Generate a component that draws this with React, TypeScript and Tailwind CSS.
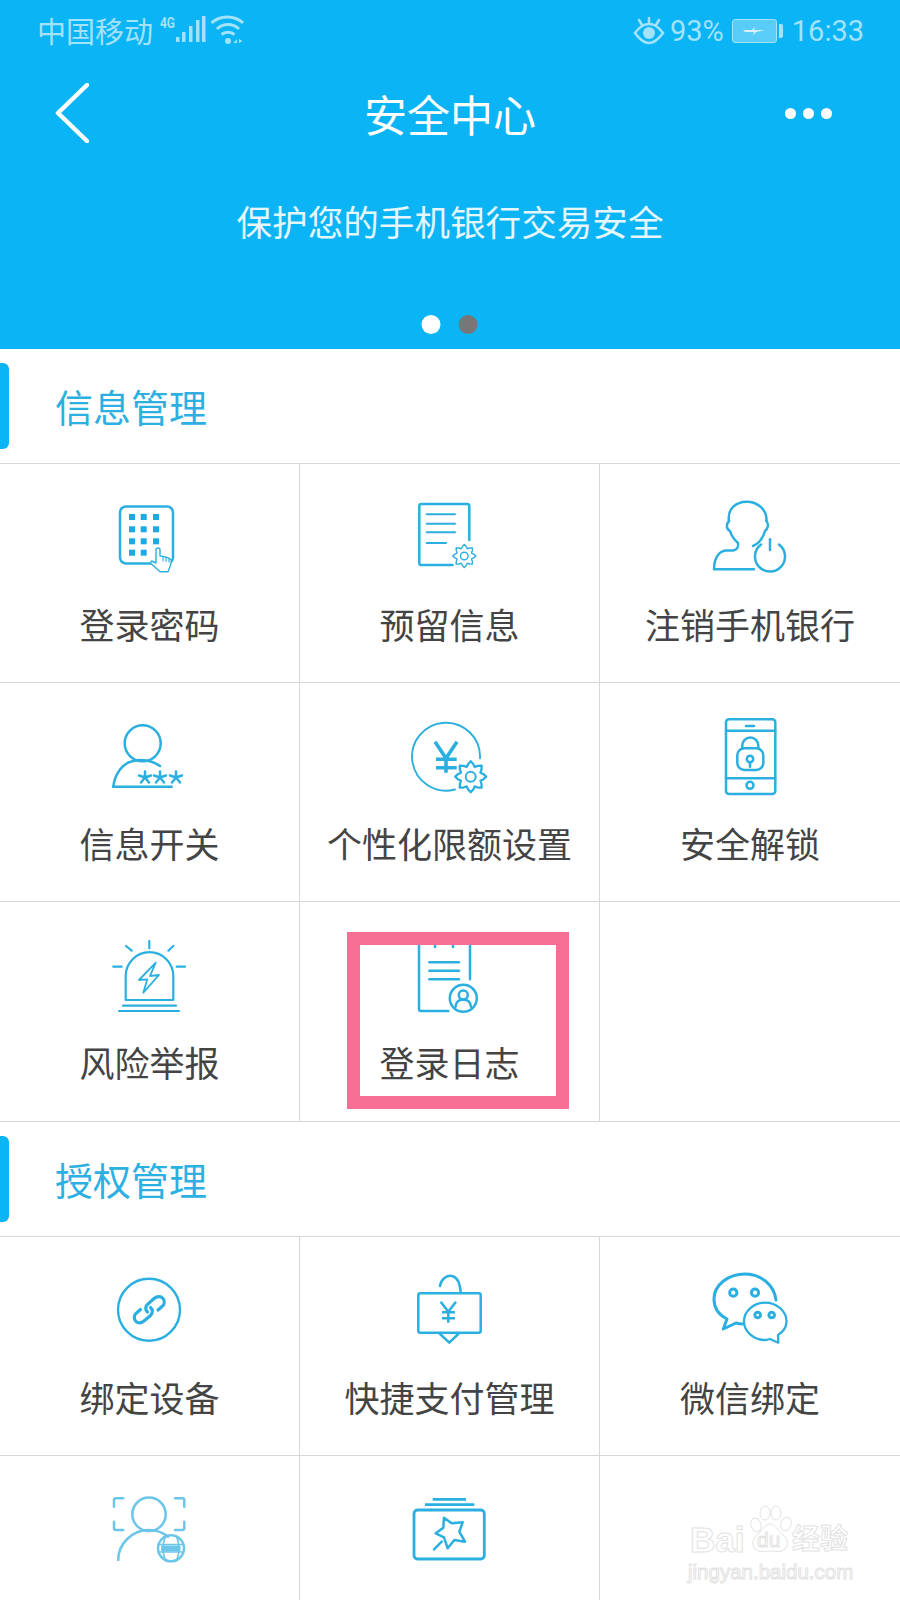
import React from 'react';

const BLUE = '#2bafe0';
const cjk = { fontFamily: '"Noto Sans CJK SC", sans-serif' };

// scalloped cog outline, used by a few of the menu icons
function gearPath(cx: number, cy: number, r: number) {
  const pts: string[] = [];
  for (let i = 0; i < 32; i++) {
    const a = (i / 32) * Math.PI * 2;
    const rr = r * (0.84 + 0.16 * Math.cos(a * 8));
    pts.push(`${(cx + rr * Math.cos(a)).toFixed(2)} ${(cy + rr * Math.sin(a)).toFixed(2)}`);
  }
  return `M${pts.join('L')}Z`;
}

function Icon({ children, color = BLUE, width = 2.5 }: { children: React.ReactNode; color?: string; width?: number }) {
  return (
    <svg
      width="100"
      height="100"
      viewBox="0 0 100 100"
      fill="none"
      stroke={color}
      strokeWidth={width}
      strokeLinecap="round"
      strokeLinejoin="round"
    >
      {children}
    </svg>
  );
}

function Asterisk({ x, y }: { x: number; y: number }) {
  return (
    <path d={`M${x} ${y - 6}V${y + 1}M${x - 6} ${y - 2}L${x} ${y}L${x + 6} ${y - 2}M${x - 4} ${y + 5}L${x} ${y}L${x + 4} ${y + 5}`} />
  );
}

const KeypadIcon = () => {
  const xs = [32, 43.7, 56];
  const ys = [31, 43.3, 55.3, 66.7];
  return (
    <Icon>
      <rect x="20" y="20.5" width="53" height="57" rx="6" strokeWidth="2.5" />
      {ys.map((y, r) =>
        xs.map((x, c) =>
          r === 3 && c === 2 ? null : <rect key={`${r}${c}`} x={x - 3} y={y - 3} width="6" height="6" fill="#1fa9e2" stroke="none" />,
        ),
      )}
      <path
        d="M56 73V64a2 2 0 0 1 4 0V70l3 .4 3 .8 3 1 2.5 2-1 5-2.5 6.5H60L50.5 77l1-2 4.5 2Z"
        fill="#fff"
        strokeWidth="1.4"
      />
      <path d="M63 70.5V75M66 71.2V75.5M69 72.2V76" strokeWidth="1.1" />
    </Icon>
  );
};

const DocGearIcon = () => (
  <Icon>
    <path d="M69.3 54V20a2 2 0 0 0-2-2H21.3a2 2 0 0 0-2 2V77a2 2 0 0 0 2 2H52.5" />
    <path d="M26.7 28.3H55M26.7 37.7H55M26.7 46.3H55M26.7 57H46" strokeWidth="2" />
    <path d={gearPath(64.3, 70, 11.5)} strokeWidth="1.4" />
    <circle cx="64.3" cy="70" r="3.8" strokeWidth="1.4" />
  </Icon>
);

const PersonPowerIcon = () => (
  <Icon>
    <path d="M29 35C27 23 36 15.7 46.7 15.7C57 15.7 67 23 66.5 35" />
    <path d="M29 35C26 38 26 43 30 45C32 52 36 55 38 57C39 62 36 64 33 64.5H26C19 65 14 72 14 83.3H54" />
    <path d="M66.5 35C69 38 68 43 65 45C63 52 60 57 53 60" />
    <path d="M61 58.5A15 15 0 1 0 79 58.5" />
    <path d="M70 53.3V64" />
  </Icon>
);

const PersonStarsIcon = () => (
  <Icon>
    <circle cx="42.7" cy="38.3" r="18" />
    <path d="M13.3 81.7C15 68 23 58 33 56C41 54 52 55 60 61" />
    <path d="M13.3 81.7H71.7" />
    <Asterisk x={45} y={72.5} />
    <Asterisk x={60} y={72.5} />
    <Asterisk x={76} y={72.5} />
  </Icon>
);

const YenGearIcon = () => (
  <Icon width={1.9}>
    <path d="M80 53.3A34 34 0 1 0 55 84.5" />
    <path d="M35 36.7L46 53.3L57 36.7M46 53.3V67.7M36 54.3H56.7M36 62.7H56.7" strokeWidth="3.6" strokeLinecap="butt" strokeLinejoin="miter" />
    <path d={gearPath(70.7, 71.7, 15.5)} strokeWidth="2.3" />
    <circle cx="70.7" cy="71.7" r="5" />
  </Icon>
);

const PhoneLockIcon = () => (
  <Icon>
    <rect x="26" y="14.3" width="49.3" height="74.7" rx="3" />
    <path d="M26 25.7H75.3M26 73.3H75.3M46 21H54" />
    <circle cx="50" cy="80.3" r="3.5" />
    <rect x="37.3" y="43.3" width="26" height="21.7" rx="7" />
    <path d="M42.3 43.3V40.5a8 8 0 0 1 16 0V43.3" />
    <circle cx="50" cy="54" r="3.2" />
    <path d="M50 57.2V61.7" />
  </Icon>
);

const AlarmIcon = () => (
  <Icon width={2.2}>
    <path d="M25.7 76V52a23.8 23.8 0 0 1 47.6 0V76Z" />
    <path d="M23 81.7H76M19 87H79" />
    <path d="M49.3 17V24.3M26 22L31.7 26.7M73.3 22L68.3 26.7M13.3 42.7H21.7M76.7 42.7H85" />
    <path d="M55.7 38.7L39 56L47.3 55.3L43.3 68.7L59 51L50 52Z" strokeWidth="1.8" />
  </Icon>
);

const LogIcon = () => (
  <Icon>
    <path d="M70 55.3V18M19 18V85a2 2 0 0 0 2 2H48.3" />
    <path d="M35 16V23M53 16V23" />
    <path d="M29.3 38.3H59M29.3 46.7H59M29.3 55.3H59" />
    <circle cx="63.3" cy="74.3" r="13.5" />
    <circle cx="63.3" cy="71" r="4.5" />
    <path d="M55.5 83C56 77 60 75.5 63.3 75.5C67 75.5 70.5 77 71 83" />
  </Icon>
);

const LinkIcon = () => (
  <Icon>
    <circle cx="49" cy="50.7" r="31" strokeWidth="2.4" />
    <g strokeWidth="3.2">
      <path d="M47.5 53C45 51 45 47 48 45L54 39.5C57 37 61 37 63 39.5C65 42 64.5 45.5 62 47.5L58 51" />
      <path d="M50.5 48.5C53 50.5 53 54 50.5 56.5L44 62C41 64.5 37.5 64.5 35.5 62C33.5 59.5 34 56 36.5 54L40.5 50.5" />
    </g>
  </Icon>
);

const WalletIcon = () => (
  <Icon>
    <rect x="18.3" y="34.3" width="62.4" height="39.4" rx="2" />
    <path d="M40 75L49.3 83.7L58.3 75" />
    <path d="M40 27C41 20 47 16 52 17C57 18 60 25 60.7 33" />
    <path d="M40.7 42.7L48.3 52.7L56 42.7M48.3 52.7V63.7M42 53.3H55M42 59.3H55" strokeLinecap="butt" />
  </Icon>
);

const WechatIcon = () => (
  <Icon width={3}>
    <path d="M76 41C74 25 60 15 45 15C28 15 14 26 14 40C14 49 19 56 27 60L23.3 70L36 64C38 64.5 41 65 43 65" />
    <path d="M44 62.3C44 52 54 43.7 65 43.7C76.5 43.7 86.5 52 86.5 62.3C86.5 68 83 73 78 76L78.3 83.7L70 80C68 80.7 67 81 65 81C54 81 44 73 44 62.3Z" strokeWidth="2.3" />
    <circle cx="33.3" cy="33.7" r="3.6" />
    <circle cx="55" cy="33.7" r="3.6" />
    <circle cx="57.7" cy="56" r="2.8" />
    <circle cx="71.7" cy="56" r="2.8" />
  </Icon>
);

const FaceIcon = () => (
  <Icon color="#6cc6ea">
    <circle cx="49" cy="36.3" r="16.7" />
    <path d="M23.3 20.3H16a2 2 0 0 0-2 2V28.7M75 20.3H82.3a2 2 0 0 1 2 2V28.7M14 43.7V50a2 2 0 0 0 2 2H23.3M84.3 43.7V50a2 2 0 0 1-2 2H75" />
    <path d="M18.3 82C18 66 32 52 49 52C56 52 62 54 68 58.7" />
    <circle cx="71" cy="70.3" r="13" />
    <path d="M58.5 66.5H83.5M58.5 74H83.5M66 58C62 65 62 76 66 82.5M76 58C80 65 80 76 76 82.5" strokeWidth="1.6" />
    <path d="M62 68H80V73H62Z" fill="#6cc6ea" strokeWidth="1" />
  </Icon>
);

const StarCardIcon = () => (
  <Icon>
    <rect x="14" y="32" width="70.3" height="49" rx="3.5" strokeWidth="2.8" />
    <path d="M32.7 21.3H66M25 26.7H74.3" strokeWidth="2.8" strokeLinecap="butt" />
    <path d="M44 39.7L51.7 45.3L62.7 44.3L59.3 53.7L65 63.7L54.3 62L47.7 70.3L44 59.3L35.7 55.3L43.3 49.7Z" />
    <path d="M41.7 63.7L34 71.3" />
  </Icon>
);

function Cell({ icon, label, last, tall }: { icon?: React.ReactNode; label?: string; last?: boolean; tall?: boolean }) {
  return (
    <div
      className={`relative flex flex-col items-center ${tall ? 'h-[220px]' : 'h-[219px]'} pt-[22px] border-b border-[#d8d8d8] ${last ? '' : 'border-r'}`}
    >
      {icon}
      {label && (
        <div className="mt-[13px] text-[35px] leading-[50px] text-[#444] whitespace-nowrap" style={cjk}>
          {label}
        </div>
      )}
    </div>
  );
}

function SectionHeader({ title }: { title: string }) {
  return (
    <div className="flex items-center h-[115px] border-b border-[#d8d8d8]">
      <div className="w-[9px] h-[86px] bg-[#0bb4f4] rounded-r-[6px]" />
      <div className="ml-[46px] text-[38px] leading-[50px] text-[#2cb0e2]" style={cjk}>
        {title}
      </div>
    </div>
  );
}

function StatusBar() {
  const c = '#a3e2fb';
  return (
    <div className="flex items-center justify-between h-[60px] pl-[37px] pr-[36px]" style={{ color: c }}>
      <div className="flex items-center">
        <span className="text-[29px] leading-[40px]" style={cjk}>
          中国移动
        </span>
        <svg width="88" height="32" viewBox="0 0 88 32" className="ml-[4px] mt-[2px]" fill={c} stroke="none">
          <text x="3" y="13" fontSize="14" fontWeight="700" fontFamily="Roboto, sans-serif" textLength="15" lengthAdjust="spacingAndGlyphs">
            4G
          </text>
          <rect x="19" y="22" width="3.5" height="5" />
          <rect x="25" y="17" width="3.5" height="10" />
          <rect x="32" y="11" width="3.5" height="16" />
          <rect x="39" y="5" width="3.5" height="22" />
          <rect x="45" y="1" width="3.5" height="26" />
          <g fill="none" stroke={c} strokeWidth="3">
            <path d="M56 8C65 0 79 0 88 8" transform="translate(-1 0) scale(.99)" />
            <path d="M61 14C67 8 77 8 83 14" transform="translate(-1 0)" />
            <path d="M65.5 19.5C69 16.5 75 16.5 78.5 19.5" transform="translate(-1 0)" />
          </g>
          <circle cx="71" cy="26" r="3" />
          <path d="M80 24L76.5 28H80ZM82 24V28L85.5 26Z" />
        </svg>
      </div>
      <div className="flex items-center text-[29px] leading-[40px] mt-[2px]" style={{ fontFamily: 'Roboto, sans-serif' }}>
        <svg width="32" height="28" viewBox="0 0 32 28" fill="none" stroke={c} strokeWidth="2.6" strokeLinecap="round">
          <path d="M2 16C7 9 12 7 16 7C20 7 25 9 30 16C25 23 20 26 16 26C12 26 7 23 2 16Z" />
          <circle cx="16" cy="16" r="6" fill={c} stroke="none" />
          <path d="M16 1V6M6 3L9 8M26 3L23 8" />
        </svg>
        <span className="ml-[5px]">93%</span>
        <div className="ml-[8px] flex items-center">
          <div className="relative flex items-center justify-center w-[45px] h-[24px] rounded-[3px] border-[1.5px] border-[#a3e2fb] bg-[#5accf8] p-[2px]">
            <svg width="22" height="10" viewBox="0 0 22 10" fill="#d8f3fd">
              <path d="M0 4H9L12 0.5L11 4H22L13 6L10 9.5L11 6H2Z" />
            </svg>
          </div>
          <div className="ml-[2px] w-[4px] h-[14px] rounded-r-[2px] bg-[#a3e2fb]" />
        </div>
        <span className="ml-[9px]">16:33</span>
      </div>
    </div>
  );
}

function Watermark() {
  const stroke = '[-webkit-text-stroke:1px_#e2e2e2]';
  return (
    <div className="absolute left-[688px] top-[1500px] w-[170px] text-white">
      <div className="relative h-[58px]">
        <span
          className={`absolute left-[2px] top-[20px] text-[35px] leading-[40px] font-bold ${stroke}`}
          style={{ fontFamily: '"Liberation Sans", sans-serif' }}
        >
          Bai
        </span>
        <svg width="46" height="54" viewBox="0 0 46 54" className="absolute left-[59px] top-[4px]" fill="#fff" stroke="#e2e2e2" strokeWidth="1">
          <ellipse cx="9" cy="21" rx="5" ry="7" transform="rotate(-18 9 21)" />
          <ellipse cx="18" cy="9" rx="5" ry="7" />
          <ellipse cx="29" cy="9" rx="5" ry="7" />
          <ellipse cx="39" cy="20" rx="5" ry="7" transform="rotate(18 39 20)" />
          <path d="M23 20C28 20 30 26 35 30C41 34 42 40 38 45C34 49 27 47 23 47C19 47 12 49 8 45C4 40 6 34 11 30C16 26 18 20 23 20Z" />
        </svg>
        <span
          className={`absolute left-[69px] top-[28px] text-[21px] leading-[24px] ${stroke}`}
          style={{ fontFamily: '"Liberation Sans", sans-serif' }}
        >
          du
        </span>
        <span className={`absolute left-[104px] top-[17px] text-[28px] leading-[40px] font-bold ${stroke}`} style={cjk}>
          经验
        </span>
      </div>
      <div
        className={`mt-[1px] text-[20.5px] leading-[26px] whitespace-nowrap ${stroke}`}
        style={{ fontFamily: '"Liberation Sans", sans-serif' }}
      >
        jingyan.baidu.com
      </div>
    </div>
  );
}

export default function App() {
  return (
    <div className="relative w-[900px] h-[1600px] overflow-hidden bg-white">
      <div className="h-[349px] bg-[#0bb4f4] flex flex-col">
        <StatusBar />
        <div className="flex items-center h-[106px]">
          <div className="w-[200px] pl-[55px]">
            <svg width="34" height="60" viewBox="0 0 34 60" fill="none" stroke="#fff" strokeWidth="4.5" strokeLinecap="round" strokeLinejoin="round">
              <path d="M32 2L3 30L32 58" />
            </svg>
          </div>
          <div className="flex-1 text-center text-[43px] leading-[60px] text-white" style={cjk}>
            安全中心
          </div>
          <div className="w-[200px] flex justify-end gap-[7px] pr-[68px]">
            <div className="w-[11px] h-[11px] rounded-full bg-white" />
            <div className="w-[11px] h-[11px] rounded-full bg-white" />
            <div className="w-[11px] h-[11px] rounded-full bg-white" />
          </div>
        </div>
        <div className="mt-[25px] text-center text-[35.6px] leading-[60px] text-[#e4f6fe]" style={cjk}>
          保护您的手机银行交易安全
        </div>
        <div className="mt-[64px] flex justify-center gap-[18px] translate-x-[-0.5px]">
          <div className="w-[19px] h-[19px] rounded-full bg-white" />
          <div className="w-[19px] h-[19px] rounded-full bg-[#777]" />
        </div>
      </div>

      <SectionHeader title="信息管理" />
      <div className="grid grid-cols-3">
        <Cell icon={<KeypadIcon />} label="登录密码" />
        <Cell icon={<DocGearIcon />} label="预留信息" />
        <Cell icon={<PersonPowerIcon />} label="注销手机银行" last />
        <Cell icon={<PersonStarsIcon />} label="信息开关" />
        <Cell icon={<YenGearIcon />} label="个性化限额设置" />
        <Cell icon={<PhoneLockIcon />} label="安全解锁" last />
        <Cell icon={<AlarmIcon />} label="风险举报" tall />
        <div className="relative">
          <Cell icon={<LogIcon />} label="登录日志" tall />
          <div className="absolute left-[47px] top-[30px] w-[222px] h-[177px] border-[13px] border-[#f76e94]" />
        </div>
        <Cell last tall />
      </div>

      <SectionHeader title="授权管理" />
      <div className="grid grid-cols-3">
        <Cell icon={<LinkIcon />} label="绑定设备" />
        <Cell icon={<WalletIcon />} label="快捷支付管理" />
        <Cell icon={<WechatIcon />} label="微信绑定" last />
        <Cell icon={<FaceIcon />} />
        <Cell icon={<StarCardIcon />} />
        <Cell last />
      </div>

      <Watermark />
    </div>
  );
}
